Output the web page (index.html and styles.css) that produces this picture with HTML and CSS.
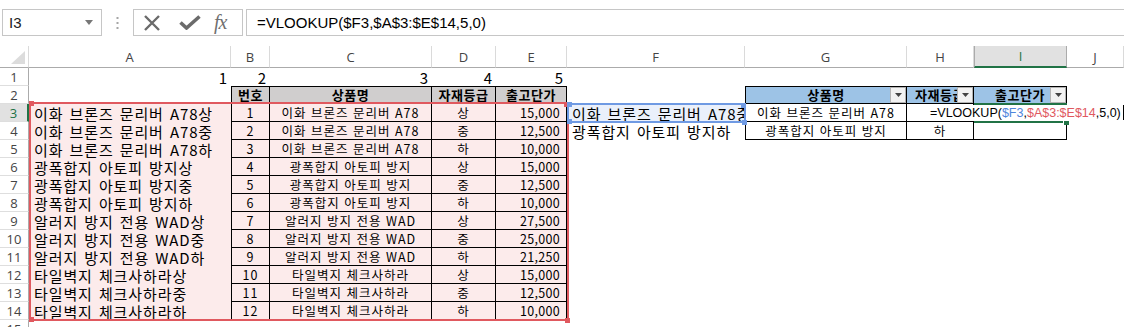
FILE: index.html
```html
<!DOCTYPE html>
<html lang="ko">
<head>
  <meta charset="UTF-8" />
  <meta name="viewport" content="width=device-width, initial-scale=1.0"/>
  <title>출고단가 조회</title>
  <link rel="stylesheet" href="styles.css">
</head>
<body>

<div class="formula-bar">
  <div class="name-box">
    I3
    <svg class="dd" width="8" height="5" viewBox="0 0 8 5"><path d="M0 0h8L4 5z" fill="#777"/></svg>
  </div>
  <div class="grip">
    <svg width="3" height="12" viewBox="0 0 3 12">
      <rect x="0.5" y="0" width="2" height="2" fill="#a6a6a6"/>
      <rect x="0.5" y="5" width="2" height="2" fill="#a6a6a6"/>
      <rect x="0.5" y="10" width="2" height="2" fill="#a6a6a6"/>
    </svg>
  </div>
  <div class="fx-box">
    <svg class="ico-x" width="18" height="16" viewBox="0 0 18 16"><path d="M2 1L16 15M16 1L2 15" stroke="#6b6b6b" stroke-width="2.4"/></svg>
    <svg class="ico-ok" width="22" height="15" viewBox="0 0 22 15"><path d="M1.5 7.5L7.5 13L20.5 1.5" stroke="#6b6b6b" stroke-width="3.6" fill="none"/></svg>
    <span class="fx">fx</span>
  </div>
  <div class="formula-input">=VLOOKUP($F3,$A$3:$E$14,5,0)</div>
</div>

<div class="sheet" id="sheet">
  <!-- cells inserted here -->

  <div class="ref-box red">
    <i class="h tl"></i><i class="h tr"></i><i class="h bl"></i><i class="h br"></i>
  </div>
  <div class="ref-box blue">
    <i class="h tl"></i><i class="h tr"></i><i class="h bl"></i><i class="h br"></i>
  </div>
  <div class="active-cell"><i class="fill-handle"></i></div>
  <div class="cell-editor">=VLOOKUP(<span class="r-blue">$F3</span>,<span class="r-red">$A$3:$E$14</span>,5,0)<span class="caret"></span></div>
</div>

<script>
  // product list, grades and prices (A3:E14)
  const products = ["이화 브론즈 문리버 A78", "광폭합지 아토피 방지", "알러지 방지 전용 WAD", "타일벽지 체크사하라"];
  const grades = ["상", "중", "하"];
  const prices = [
    [15000, 12500, 10000],
    [15000, 12500, 10000],
    [27500, 25000, 21250],
    [15000, 12500, 10000]
  ];
  const colNames = ["A", "B", "C", "D", "E", "F", "G", "H", "I", "J"];

  const sheet = document.getElementById("sheet");
  const firstOverlay = sheet.querySelector(".ref-box");

  function add(html, cls) {
    const div = document.createElement("div");
    div.className = cls;
    div.innerHTML = html;
    sheet.insertBefore(div, firstOverlay);
  }

  const filterBtn = `<span class="filter-btn"><svg width="7" height="4" viewBox="0 0 7 4"><path d="M0 0h7L3.5 4z" fill="#444"/></svg></span>`;

  add(`<span class="corner-tri"></span>`, "corner");
  colNames.forEach(c => add(c, "col-head" + (c === "I" ? " active" : "")));

  for (let r = 1; r <= 15; r++) {
    add(r, "row-head" + (r === 3 ? " active" : ""));
    const cells = colNames.map(() => ({ text: "", cls: "cell" }));

    if (r === 1) {
      for (let i = 0; i < 5; i++) cells[i] = { text: i + 1, cls: "cell big num" };
    }
    if (r === 2) {
      ["번호", "상품명", "자재등급", "출고단가"].forEach((t, i) => {
        cells[i + 1] = { text: t, cls: "cell tb tb-t th" + (i === 0 ? " tb-l" : "") };
      });
      ["상품명", "자재등급", "출고단가"].forEach((t, i) => {
        cells[i + 6] = { text: `<span>${t}</span>` + filterBtn, cls: "cell tb tb-t th-blue" + (i === 0 ? " tb-l" : "") };
      });
    }
    if (r >= 3 && r <= 14) {
      const n = r - 3;
      const p = Math.floor(n / 3);
      const g = n % 3;
      cells[0] = { text: products[p] + grades[g], cls: "cell big ref-fill" };
      cells[1] = { text: n + 1, cls: "cell tb tb-l ref-fill" };
      cells[2] = { text: products[p], cls: "cell tb ref-fill" };
      cells[3] = { text: grades[g], cls: "cell tb ref-fill" };
      cells[4] = { text: prices[p][g].toLocaleString("en-US"), cls: "cell tb right ref-fill" };
    }
    if (r === 3) {
      cells[5] = { text: "이화 브론즈 문리버 A78중", cls: "cell big blue-fill clip" };
      cells[6] = { text: products[0], cls: "cell tb tb-l" };
      cells[7] = { text: "", cls: "cell tb" };
      cells[8] = { text: "", cls: "cell tb" };
    }
    if (r === 4) {
      cells[5] = { text: "광폭합지 아토피 방지하", cls: "cell big" };
      cells[6] = { text: products[1], cls: "cell tb tb-l" };
      cells[7] = { text: "하", cls: "cell tb" };
      cells[8] = { text: "", cls: "cell tb" };
    }

    cells.forEach(c => add(c.text, c.cls));
  }
</script>

</body>
</html>
```

FILE: styles.css
```css
* {
  box-sizing: border-box;
}

body {
  margin: 0;
  height: 327px;
  overflow: hidden;
  background: #fff;
  color: #000;
  font-family: "Noto Sans CJK KR", "Noto Sans", sans-serif;
}

/* formula bar */
.formula-bar {
  display: flex;
  align-items: flex-start;
  height: 46px;
  padding-top: 9px;
}

.name-box {
  margin-left: 2px;
  width: 100px;
  height: 27px;
  border: 1px solid #c6c6c6;
  display: flex;
  align-items: center;
  justify-content: space-between;
  padding: 0 8px 0 6px;
  font: 15px "Liberation Sans", sans-serif;
  color: #222;
}

.grip {
  width: 31px;
  height: 27px;
  display: flex;
  align-items: center;
  justify-content: center;
}

.fx-box {
  width: 110px;
  height: 27px;
  border: 1px solid #c6c6c6;
  display: flex;
  align-items: center;
  padding-left: 9px;
}

.ico-ok {
  margin-left: 18px;
}

.fx {
  margin-left: 13px;
  font: italic 20px "Liberation Serif", serif;
  color: #707070;
  letter-spacing: -1px;
}

.formula-input {
  flex: 1;
  margin-left: 3px;
  height: 27px;
  border: 1px solid #c6c6c6;
  border-right: none;
  padding-left: 10px;
  font: 15px "Liberation Sans", sans-serif;
  line-height: 25px;
}

/* sheet grid */
.sheet {
  position: relative;
  display: grid;
  grid-template-columns: 29px 202px 39px 162px 64px 71px 178px 162px 67px 93px 57px;
  grid-template-rows: 22px repeat(15, 18px);
}

.corner {
  position: relative;
  border-right: 1px solid #dadada;
  border-bottom: 1px solid #ababab;
}

.corner-tri {
  position: absolute;
  right: 3px;
  bottom: 3px;
  border-style: solid;
  border-width: 0 0 13px 14px;
  border-color: transparent transparent #dcdcdc transparent;
}

.col-head {
  display: flex;
  align-items: center;
  justify-content: center;
  border-right: 1px solid #dadada;
  border-bottom: 1px solid #ababab;
  font: 13px "Open Sans", sans-serif;
  color: #444;
}

.col-head.active {
  background: #e1e1e1;
  color: #217346;
  border-left: 1px solid #ababab;
  border-right-color: #ababab;
  border-bottom: 2px solid #217346;
}

.row-head {
  display: flex;
  align-items: center;
  justify-content: center;
  border-right: 1px solid #ababab;
  border-bottom: 1px solid #dedede;
  font: 13px "Open Sans", sans-serif;
  line-height: 16px;
  color: #444;
}

.row-head.active {
  background: #e1e1e1;
  color: #217346;
  border-right: 2px solid #217346;
}

.cell {
  display: flex;
  align-items: center;
  padding: 0 3px;
  white-space: nowrap;
  font-size: 12.5px;
  line-height: 16px;
  letter-spacing: 1px;
}

.clip {
  overflow: hidden;
}

.big {
  font-size: 15px;
  line-height: 17px;
  padding-left: 5px;
  letter-spacing: 0.9px;
  word-spacing: 1px;
}

.num {
  justify-content: flex-end;
  padding-right: 4px;
  letter-spacing: 0;
}

.ref-fill {
  background: #fcebeb;
}

.blue-fill {
  background: #eaf0fb;
}

.tb {
  justify-content: center;
  border-right: 1px solid #000;
  border-bottom: 1px solid #000;
}

.tb-l {
  border-left: 1px solid #000;
}

.tb-t {
  border-top: 1px solid #000;
}

.right {
  justify-content: flex-end;
  padding-right: 6px;
  letter-spacing: 0.3px;
}

.th {
  background: #d0cece;
  font-weight: 700;
  font-size: 13px;
  letter-spacing: 0.5px;
}

.th-blue {
  position: relative;
  overflow: hidden;
  background: #9dc3e6;
  font-weight: 700;
  font-size: 13px;
  letter-spacing: 0.5px;
}

.filter-btn {
  position: absolute;
  right: 0;
  top: 0;
  width: 16px;
  height: 16px;
  background: #f2f2f2;
  border: 1px solid #b4b4b4;
  display: flex;
  align-items: center;
  justify-content: center;
}

/* reference highlights while editing I3 */
.ref-box {
  position: absolute;
  z-index: 2;
  border: 2px solid;
}

.ref-box.red {
  left: 29px;
  top: 56px;
  width: 540px;
  height: 219px;
  border-color: #e0595f;
}

.ref-box.blue {
  left: 567px;
  top: 57px;
  width: 179px;
  height: 20px;
  border-color: #6f9ae3;
}

.h {
  position: absolute;
  width: 5px;
  height: 5px;
}

.red .h {
  background: #e0595f;
}

.blue .h {
  background: #6f9ae3;
}

.h.tl { left: -2px; top: -3px; }
.h.tr { right: -2px; top: -2px; }
.h.bl { left: -2px; bottom: -3px; }
.h.br { right: -3px; bottom: -4px; }

.active-cell {
  position: absolute;
  z-index: 2;
  left: 974px;
  top: 57px;
  width: 93px;
  height: 20px;
  border: 2px solid #217346;
}

.fill-handle {
  position: absolute;
  right: -4px;
  bottom: -4px;
  width: 6px;
  height: 6px;
  background: #217346;
  border-left: 1px solid #fff;
  border-top: 1px solid #fff;
}

.cell-editor {
  position: absolute;
  z-index: 3;
  left: 926px;
  top: 59px;
  width: 191px;
  height: 16px;
  background: #fff;
  padding-left: 4px;
  font: 12.5px "Liberation Sans", sans-serif;
  line-height: 16px;
  white-space: nowrap;
}

.r-blue {
  color: #4f86dc;
}

.r-red {
  color: #e0595f;
}

.caret {
  display: inline-block;
  width: 1px;
  height: 15px;
  margin-left: 2px;
  vertical-align: -3px;
  background: #000;
}
```
